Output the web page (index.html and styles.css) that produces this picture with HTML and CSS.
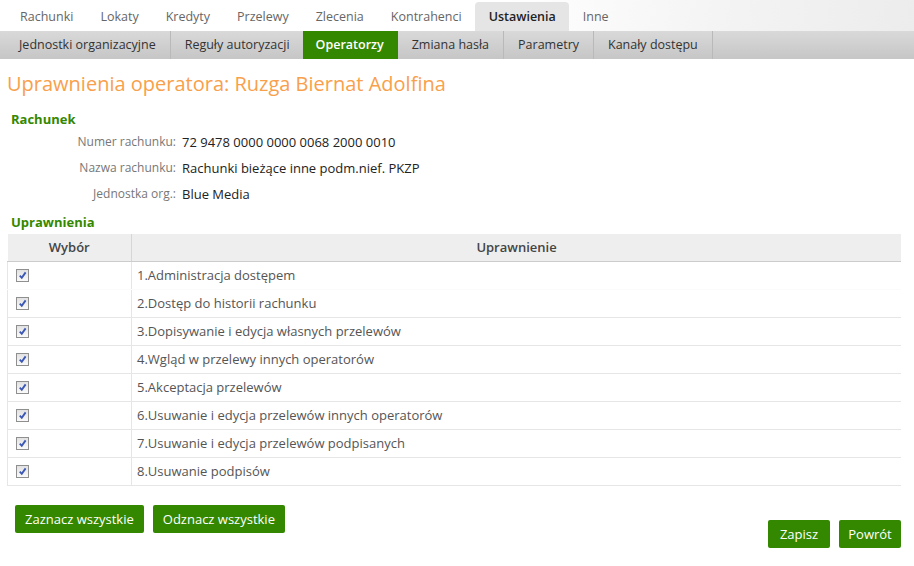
FILE: index.html
```html
<!DOCTYPE html>
<html lang="pl">
<head>
    <meta charset="UTF-8">
    <title>Uprawnienia operatora</title>
    <link rel="stylesheet" href="styles.css">
</head>
<body>
    <div class="top">
        <div class="tabs">
            <a class="tab">Rachunki</a>
            <a class="tab">Lokaty</a>
            <a class="tab">Kredyty</a>
            <a class="tab">Przelewy</a>
            <a class="tab">Zlecenia</a>
            <a class="tab">Kontrahenci</a>
            <a class="tab act">Ustawienia</a>
            <a class="tab">Inne</a>
        </div>
        <div class="sub">
            <a class="si">Jednostki organizacyjne</a>
            <a class="si">Reguły autoryzacji</a>
            <a class="si act">Operatorzy</a>
            <a class="si">Zmiana hasła</a>
            <a class="si">Parametry</a>
            <a class="si">Kanały dostępu</a>
        </div>
    </div>

    <div class="main">
        <h1>Uprawnienia operatora: Ruzga Biernat Adolfina</h1>

        <h2>Rachunek</h2>
        <div class="info">
            <div class="lbl">Numer rachunku:</div><div class="val">72 9478 0000 0000 0068 2000 0010</div>
            <div class="lbl">Nazwa rachunku:</div><div class="val">Rachunki bieżące inne podm.nief. PKZP</div>
            <div class="lbl">Jednostka org.:</div><div class="val">Blue Media</div>
        </div>

        <h2>Uprawnienia</h2>
        <table class="grid">
            <thead>
                <tr><th class="c1">Wybór</th><th>Uprawnienie</th></tr>
            </thead>
            <tbody>
                <tr><td><span class="chk"><svg viewBox="0 0 12 12"><path d="M3 6.2 L5.2 8.6 L9.4 2.6" /></svg></span></td><td>1.Administracja dostępem</td></tr>
                <tr><td><span class="chk"><svg viewBox="0 0 12 12"><path d="M3 6.2 L5.2 8.6 L9.4 2.6" /></svg></span></td><td>2.Dostęp do historii rachunku</td></tr>
                <tr><td><span class="chk"><svg viewBox="0 0 12 12"><path d="M3 6.2 L5.2 8.6 L9.4 2.6" /></svg></span></td><td>3.Dopisywanie i edycja własnych przelewów</td></tr>
                <tr><td><span class="chk"><svg viewBox="0 0 12 12"><path d="M3 6.2 L5.2 8.6 L9.4 2.6" /></svg></span></td><td>4.Wgląd w przelewy innych operatorów</td></tr>
                <tr><td><span class="chk"><svg viewBox="0 0 12 12"><path d="M3 6.2 L5.2 8.6 L9.4 2.6" /></svg></span></td><td>5.Akceptacja przelewów</td></tr>
                <tr><td><span class="chk"><svg viewBox="0 0 12 12"><path d="M3 6.2 L5.2 8.6 L9.4 2.6" /></svg></span></td><td>6.Usuwanie i edycja przelewów innych operatorów</td></tr>
                <tr><td><span class="chk"><svg viewBox="0 0 12 12"><path d="M3 6.2 L5.2 8.6 L9.4 2.6" /></svg></span></td><td>7.Usuwanie i edycja przelewów podpisanych</td></tr>
                <tr><td><span class="chk"><svg viewBox="0 0 12 12"><path d="M3 6.2 L5.2 8.6 L9.4 2.6" /></svg></span></td><td>8.Usuwanie podpisów</td></tr>
            </tbody>
        </table>

        <div class="btns">
            <div class="left">
                <button class="btn">Zaznacz wszystkie</button>
                <button class="btn">Odznacz wszystkie</button>
            </div>
            <div class="right">
                <button class="btn">Zapisz</button>
                <button class="btn">Powrót</button>
            </div>
        </div>
    </div>
</body>
</html>
```

FILE: styles.css
```css
*{
    margin:0;
    padding:0;
    box-sizing:border-box;
}
body{
    font-family:"Open Sans", "DejaVu Sans", sans-serif;
    font-size:13px;
    color:#333;
    background:#fff;
}
a{
    cursor:pointer;
}
.top{
    background:linear-gradient(100deg, #fff 0%, #fff 55%, #f3f3f3 80%, #ececec 100%);
}
.tabs{
    display:flex;
    height:31px;
    padding:2px 0 0 6.5px;
    font-size:12.5px;
}
.tab{
    padding:0 13.5px;
    line-height:29px;
    color:#666;
}
.tab.act{
    background:#e5e5e5;
    color:#222;
    font-weight:600;
    border-radius:4px 4px 0 0;
}
.sub{
    display:flex;
    height:28px;
    background:linear-gradient(#d9d9d9, #c6c6c6);
    padding-left:5px;
    font-size:12.5px;
}
.si{
    padding:0 14px;
    line-height:28px;
    color:#333;
    border-right:1px solid #b9b9b9;
}
.si.act{
    background:#338800;
    color:#fff;
    font-weight:600;
    padding:0 13px;
    margin-left:-2px;
    border-right-color:#338800;
}
.main{
    padding:0 13px 0 7px;
}
h1{
    font-size:20px;
    font-weight:normal;
    color:#f9a04b;
    margin:11px 0 0;
    line-height:27px;
}
h2{
    font-size:13px;
    color:#338800;
    font-weight:bold;
    padding-left:4px;
    line-height:18px;
}
h2:first-of-type{
    margin-top:13px;
}
.info{
    display:grid;
    grid-template-columns:169px 1fr;
    column-gap:6px;
    row-gap:8px;
    margin:5px 0 10px;
}
.lbl{
    text-align:right;
    color:#777;
    font-size:12px;
    line-height:18px;
}
.val{
    color:#222;
    line-height:18px;
}
.grid{
    width:100%;
    border-collapse:collapse;
    margin-top:3px;
}
.grid th{
    background:#eee;
    color:#444;
    font-weight:600;
    height:27px;
    border-bottom:1px solid #ccc;
    border-left:1px solid #d6d6d6;
    font-size:13px;
}
.grid th.c1{
    width:124px;
    border-left:0;
}
.grid td{
    height:28px;
    border-bottom:1px solid #e6e6e6;
    border-left:1px solid #e6e6e6;
    color:#555;
    padding-left:5px;
}
.grid td:first-child{
    padding-left:8px;
}
.grid tr:first-child td{
    border-bottom-color:#fbfbfb;
}
.chk{
    display:block;
    width:13px;
    height:13px;
    border:1px solid #8f8f8f;
    background:linear-gradient(#e2e2e2, #fafafa);
    margin-top:1px;
}
.chk svg{
    display:block;
    width:11px;
    height:11px;
}
.chk path{
    fill:none;
    stroke:#3b57b5;
    stroke-width:2;
}
.btns{
    display:flex;
    justify-content:space-between;
    align-items:flex-start;
    padding:19px 0 0 8px;
}
.left, .right{
    display:flex;
    gap:9px;
}
.btns .right{
    padding-top:15px;
}
.btn{
    font-family:"Open Sans", "DejaVu Sans", sans-serif;
    font-size:13px;
    background:#338800;
    color:#fff;
    border:0;
    border-radius:2px;
    height:28px;
    padding:0 10px;
}
.right .btn{
    padding:0 9px;
    min-width:62px;
}
```
